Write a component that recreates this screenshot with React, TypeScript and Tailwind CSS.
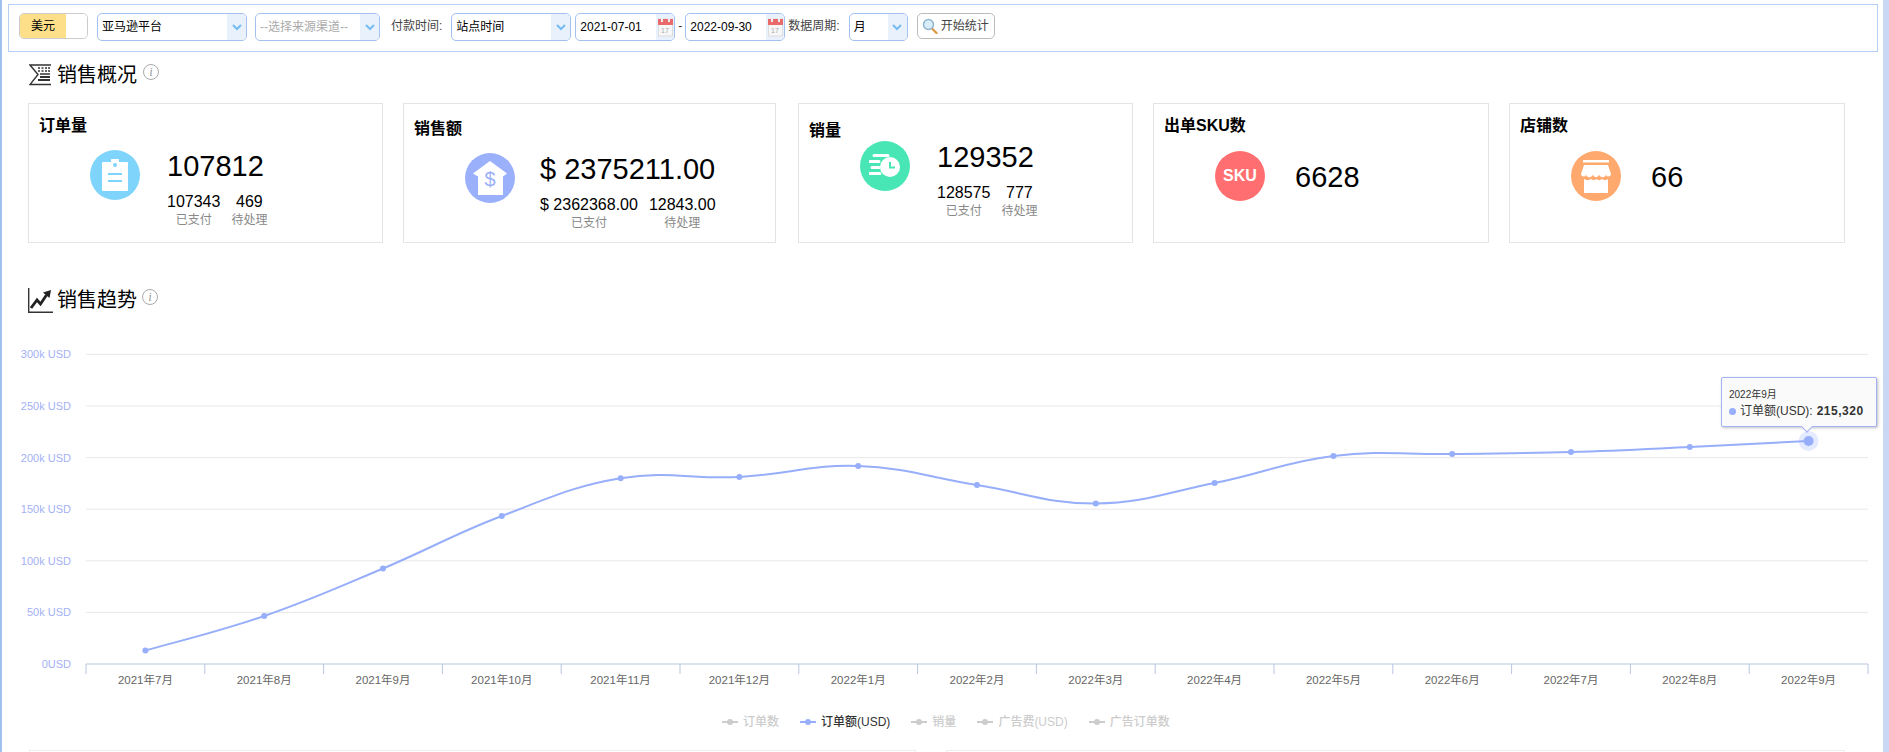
import type { ReactNode } from "react";

const STATS = [
  {
    title: "订单量",
    box: "w-[355px]",
    titlePad: "pt-[12px]",
    rowPad: "mt-[14px]",
    gap: "gap-[27px]",
    color: "bg-[#7fd4fb]",
    icon: "clipboard",
    total: "107812",
    paid: "107343",
    pending: "469",
  },
  {
    title: "销售额",
    box: "ml-[20px] w-[373px]",
    titlePad: "pt-[15px]",
    rowPad: "mt-[14px]",
    gap: "gap-[25px]",
    color: "bg-[#9bb0fb]",
    icon: "dollar",
    total: "$ 2375211.00",
    paid: "$ 2362368.00",
    pending: "12843.00",
  },
  {
    title: "销量",
    box: "ml-[22px] w-[335px]",
    titlePad: "pt-[17px]",
    rowPad: "mt-0",
    gap: "gap-[27px]",
    color: "bg-[#48e6b4]",
    icon: "clock",
    total: "129352",
    paid: "128575",
    pending: "777",
  },
  {
    title: "出单SKU数",
    box: "ml-[20px] w-[336px]",
    titlePad: "pt-[12px]",
    rowPad: "mt-[15px]",
    gap: "gap-[30px]",
    color: "bg-[#ff6f72]",
    icon: "sku",
    total: "6628",
  },
  {
    title: "店铺数",
    box: "ml-[20px] w-[336px]",
    titlePad: "pt-[12px]",
    rowPad: "mt-[15px]",
    gap: "gap-[30px]",
    color: "bg-[#ffa96e]",
    icon: "store",
    total: "66",
  },
];

const MONTHS = [
  "2021年7月", "2021年8月", "2021年9月", "2021年10月", "2021年11月",
  "2021年12月", "2022年1月", "2022年2月", "2022年3月", "2022年4月",
  "2022年5月", "2022年6月", "2022年7月", "2022年8月", "2022年9月",
];

const POINT_Y = [650.5, 616, 568.5, 516, 478.3, 477, 466, 485, 503.5, 483, 456, 454, 452, 447, 441];
const Y_TICKS = ["0USD", "50k USD", "100k USD", "150k USD", "200k USD", "250k USD", "300k USD"];
const LEGEND = [
  { label: "订单数", active: false, box: "" },
  { label: "订单额(USD)", active: true, box: "" },
  { label: "销量", active: false, box: "" },
  { label: "广告费(USD)", active: false, box: "" },
  { label: "广告订单数", active: false, box: "" },
];

const AXIS_LEFT = 86;
const AXIS_Y = 664;
const STEP = 118.8;
const pointX = (i: number) => AXIS_LEFT + STEP / 2 + i * STEP;

function linePath() {
  const pts = POINT_Y.map((y, i) => [pointX(i), y]);
  let d = `M${pts[0][0]} ${pts[0][1]}`;
  for (let i = 0; i < pts.length - 1; i++) {
    const p0 = pts[Math.max(i - 1, 0)];
    const p1 = pts[i];
    const p2 = pts[i + 1];
    const p3 = pts[Math.min(i + 2, pts.length - 1)];
    const t = 0.2;
    d += ` C${p1[0] + (p2[0] - p0[0]) * t} ${p1[1] + (p2[1] - p0[1]) * t} ${p2[0] - (p3[0] - p1[0]) * t} ${p2[1] - (p3[1] - p1[1]) * t} ${p2[0]} ${p2[1]}`;
  }
  return d;
}

function Chevron() {
  return (
    <svg width="10" height="7" viewBox="0 0 10 7" fill="none" aria-hidden>
      <path d="M1 1l4 4 4-4" stroke="#74bdf2" strokeWidth="2" />
    </svg>
  );
}

function Select({ width, text, muted }: { width: string; text: string; muted?: boolean }) {
  return (
    <div className={`flex h-[28px] items-stretch overflow-hidden rounded-[5px] border border-[#a2c1ee] ${width}`}>
      <span className={`flex-1 truncate pl-[4px] text-[12px] leading-[26px] ${muted ? "text-[#aaa]" : "text-black"}`}>
        {text}
      </span>
      <span className="flex w-[19px] items-center justify-center bg-[#e8f1fc]">
        <Chevron />
      </span>
    </div>
  );
}

function CalendarIcon() {
  return (
    <svg width="15" height="19" viewBox="0 0 15 19" aria-hidden>
      <rect x="0.5" y="1" width="14" height="17" fill="#f7f7f7" stroke="#ddd" />
      <rect x="0" y="1" width="15" height="6" fill="#e86a6a" />
      <rect x="3" y="0" width="2" height="4" fill="#eee" />
      <rect x="10" y="0" width="2" height="4" fill="#eee" />
      <text x="3" y="15" fontSize="7" fill="#aaa">17</text>
    </svg>
  );
}

function DateBox({ value }: { value: string }) {
  return (
    <div className="flex h-[28px] w-[100px] items-stretch overflow-hidden rounded-[5px] border border-[#a2c1ee]">
      <span className="flex-1 pl-[4px] text-[12px] leading-[26px] text-black">{value}</span>
      <span className="flex w-[18px] items-center justify-center bg-[#e8f1fc]">
        <CalendarIcon />
      </span>
    </div>
  );
}

function Toolbar() {
  return (
    <div className="mt-[4px] ml-[6px] flex h-[48px] w-[1870px] items-start border border-[#b3cff5] pt-[8px] pl-[10px]">
      <div className="flex h-[26px] w-[69px] overflow-hidden rounded-[5px] border border-[#ccc]">
        <span className="w-[46px] bg-[#fddf8a] text-center text-[12px] leading-[24px] text-black">美元</span>
        <span className="flex-1 rounded-[4px] bg-white" />
      </div>
      <div className="ml-[9px]"><Select width="w-[150px]" text="亚马逊平台" /></div>
      <div className="ml-[8px]"><Select width="w-[125px]" text="--选择来源渠道--" muted /></div>
      <span className="ml-[11px] text-[12px] leading-[26px] text-[#444]">付款时间:</span>
      <div className="ml-[9px]"><Select width="w-[120px]" text="站点时间" /></div>
      <div className="ml-[4px]"><DateBox value="2021-07-01" /></div>
      <span className="mx-[3px] w-[4px] text-[12px] leading-[26px] text-[#333]">-</span>
      <DateBox value="2022-09-30" />
      <span className="ml-[3px] text-[12px] leading-[26px] text-[#444]">数据周期:</span>
      <div className="ml-[9px]"><Select width="w-[59px]" text="月" /></div>
      <button
        type="button"
        className="ml-[9px] flex h-[26px] w-[78px] items-center gap-[3px] rounded-[5px] border border-[#bbb] bg-white pl-[4px] text-[12px] text-[#444]"
      >
        <svg width="16" height="16" viewBox="0 0 16 16" aria-hidden>
          <path d="M9.5 10l5 5" stroke="#d99a4a" strokeWidth="2.4" strokeLinecap="round" />
          <circle cx="6.5" cy="6.5" r="5" fill="#d8ecfa" stroke="#8fb4cf" strokeWidth="1.4" />
        </svg>
        开始统计
      </button>
    </div>
  );
}

function InfoIcon() {
  return (
    <span className="flex size-[16px] items-center justify-center rounded-full border border-[#aaa] font-serif text-[12px] leading-none text-[#999] italic">
      i
    </span>
  );
}

function Heading({ icon, box }: { icon: ReactNode; box: string }) {
  return null;
}

function OverviewIcon() {
  return (
    <svg width="23" height="22" viewBox="0 0 23 22" fill="none" stroke="#333" aria-hidden>
      <path d="M22 1H1l8 9.500L1 20.500h21" strokeWidth="1.4" />
      <path d="M9 4h2M12.500 4h2M16 4h2M19 4h2M9 7h2M12.500 7h2M16 7h2M19 7h2M11 10h10" strokeWidth="1.6" />
      <path d="M11 13h10M9 16h12" strokeWidth="1.8" />
    </svg>
  );
}

function TrendIcon() {
  return (
    <svg width="25" height="25" viewBox="0 0 25 25" fill="none" aria-hidden>
      <path d="M0.700 0v24.300H25" stroke="#333" strokeWidth="1.4" />
      <path d="M3 20l6-8 3.500 4 6-9" stroke="#222" strokeWidth="2.800" />
      <path d="M15 4.500L23 2l-1.500 8z" fill="#222" />
    </svg>
  );
}

function CircleGlyph({ name }: { name: string }) {
  if (name === "sku") {
    return <span className="text-[16px] font-bold text-white">SKU</span>;
  }
  if (name === "clipboard") {
    return (
      <svg width="28" height="32" viewBox="0 0 28 32" aria-hidden>
        <path d="M2 3h8V1.500a4 4 0 0 1 8 0V3h8a1 1 0 0 1 1 1v27a1 1 0 0 1-1 1H2a1 1 0 0 1-1-1V4a1 1 0 0 1 1-1z" fill="#fff" />
        <circle cx="14" cy="6" r="2" fill="#7fd4fb" />
        <path d="M7 15h14M7 22h14" stroke="#7fd4fb" strokeWidth="2" />
      </svg>
    );
  }
  if (name === "dollar") {
    return (
      <svg width="36" height="34" viewBox="0 0 36 34" aria-hidden>
        <path d="M18 0l17 12.500-4 3V34H6V15.500l-5-3z" fill="#fff" transform="translate(0 0)" />
        <text x="18" y="25" textAnchor="middle" fontSize="20" fill="#9bb0fb">$</text>
      </svg>
    );
  }
  if (name === "clock") {
    return (
      <svg width="32" height="24" viewBox="0 0 32 24" aria-hidden>
        <path d="M5 1.500h14M0 7.500h10M3 13.500h7M0 19.500h11" stroke="#fff" strokeWidth="3" strokeLinecap="round" />
        <circle cx="21" cy="13" r="10" fill="#fff" />
        <path d="M21 8v5.500h5" stroke="#48e6b4" strokeWidth="2" fill="none" />
      </svg>
    );
  }
  return (
    <svg width="30" height="33" viewBox="0 0 30 33" aria-hidden>
      <path d="M2 0h26v2.500H2z" fill="#fff" />
      <path d="M3 5h24l3 9c0 3-4.500 3.500-5 .500-.5 3.500-6 3.500-7 0-1 3.500-5 3.500-6 0-1 3.500-6.500 3.500-7 0-.5 3-5 2.500-5-.500z" fill="#fff" />
      <path d="M3 19c2 1.500 5 1.500 7 0 1.500 1.500 4 1.500 5.500 0 1.500 1.500 4 1.500 5.500 0 2 1.500 4.500 1.500 6 0V33H3z" fill="#fff" />
    </svg>
  );
}

function StatCard({ stat }: { stat: (typeof STATS)[number] }) {
  return (
    <div className={`h-[140px] border border-[#e2e4e8] pl-[10px] ${stat.box} ${stat.titlePad}`}>
      <h3 className="text-[16px] leading-[20px] font-bold text-black">{stat.title}</h3>
      <div className={`ml-[51px] flex items-start ${stat.rowPad} ${stat.gap}`}>
        <span className={`flex size-[50px] shrink-0 items-center justify-center rounded-full ${stat.color}`}>
          <CircleGlyph name={stat.icon} />
        </span>
        <div className={stat.paid ? "" : "pt-[10px]"}>
          <div className="text-[29px] leading-[32px] text-black">{stat.total}</div>
          {stat.paid && (
            <div className="mt-[10px] flex gap-[11px]">
              <div className="flex flex-col items-center">
                <span className="text-[16px] leading-[20px] text-black">{stat.paid}</span>
                <span className="text-[12px] leading-[16px] text-[#888]">已支付</span>
              </div>
              <div className="flex flex-col items-center">
                <span className="text-[16px] leading-[20px] text-black">{stat.pending}</span>
                <span className="text-[12px] leading-[16px] text-[#888]">待处理</span>
              </div>
            </div>
          )}
        </div>
      </div>
    </div>
  );
}

function TrendChart() {
  return (
    <div className="relative mt-[27px] h-[360px]">
      {/* viewBox uses page coordinates, the chart is only a drawing */}
      <svg width="1881" height="360" viewBox="2 340 1881 360" className="block" aria-hidden>
        {Y_TICKS.map((label, i) => {
          const y = AXIS_Y - i * 51.6;
          return (
            <g key={label}>
              {i > 0 && <line x1={AXIS_LEFT} x2={1868} y1={y} y2={y} stroke="#e8e8e8" />}
              <text x={71} y={y + 4} textAnchor="end" fontSize="11" fill="#a3b1f5">{label}</text>
            </g>
          );
        })}
        <line x1={AXIS_LEFT} x2={1868} y1={AXIS_Y} y2={AXIS_Y} stroke="#b8c7e0" />
        {Array.from({ length: 16 }, (_, i) => (
          <line
            key={i}
            x1={AXIS_LEFT + i * STEP}
            x2={AXIS_LEFT + i * STEP}
            y1={AXIS_Y}
            y2={AXIS_Y + 10}
            stroke="#b8c7e0"
          />
        ))}
        {MONTHS.map((m, i) => (
          <text key={m} x={pointX(i)} y={684} textAnchor="middle" fontSize="11.500" fill="#666">{m}</text>
        ))}
        <path d={linePath()} fill="none" stroke="#97aefa" strokeWidth="2" />
        {POINT_Y.map((y, i) => (
          <circle key={i} cx={pointX(i)} cy={y} r={3} fill="#97aefa" />
        ))}
        <circle cx={pointX(14)} cy={441} r={10} fill="#97aefa" fillOpacity="0.25" />
        <circle cx={pointX(14)} cy={441} r={5} fill="#97aefa" />
      </svg>
      <div className="absolute top-[37px] left-[1719px] h-[50px] w-[156px] rounded-[2px] border border-[#a3b1f5] bg-[#fafafa] pt-[10px] pl-[7px] shadow-[1px_1px_3px_rgba(0,0,0,0.25)]">
        <div className="text-[10px] leading-[14px] text-[#333]">2022年9月</div>
        <div className="flex items-center text-[12px] leading-[18px] text-[#333]">
          <span className="mr-[4px] size-[7px] rounded-full bg-[#97aefa]" />
          订单额(USD):
          <b className="ml-[4px] tracking-[0.5px]">215,320</b>
        </div>
        <span className="absolute -bottom-[5px] left-[81px] size-[8px] rotate-45 border-r border-b border-[#a3b1f5] bg-[#fafafa]" />
      </div>
    </div>
  );
}

function Legend() {
  return (
    <div className="mt-[14px] ml-[720px] flex h-[16px] items-center gap-[21px] text-[12px] font-medium">
      {LEGEND.map((item) => (
        <div key={item.label} className="flex items-center gap-[5px]">
          <svg width="16" height="8" viewBox="0 0 16 8" aria-hidden>
            <line x1="0" x2="16" y1="4" y2="4" stroke={item.active ? "#97aefa" : "#ccc"} strokeWidth="2" />
            <circle cx="8" cy="4" r="3" fill={item.active ? "#97aefa" : "#ccc"} />
          </svg>
          <span className={item.active ? "text-[#333]" : "text-[#ccc]"}>{item.label}</span>
        </div>
      ))}
    </div>
  );
}

export default function App() {
  return (
    <div className="flex h-[752px] w-[1889px] overflow-hidden bg-white [font-family:'Liberation_Sans','Noto_Sans_CJK_SC',sans-serif]">
      <div className="w-[2px] shrink-0 bg-[#a0c0ee]" />
      <main className="w-[1881px] shrink-0">
        <Toolbar />
        <div className="mt-[12px] ml-[27px] flex h-[22px] items-center">
          <OverviewIcon />
          <span className="ml-[5px] text-[20px] leading-[22px] text-black">销售概况</span>
          <span className="ml-[6px] -translate-y-[3px]"><InfoIcon /></span>
        </div>
        <div className="mt-[17px] ml-[26px] flex">
          {STATS.map((stat) => (
            <StatCard key={stat.title} stat={stat} />
          ))}
        </div>
        <div className="mt-[45px] ml-[26px] flex h-[25px] items-center">
          <TrendIcon />
          <span className="ml-[4px] text-[20px] leading-[25px] text-black">销售趋势</span>
          <span className="ml-[5px] -translate-y-[4px]"><InfoIcon /></span>
        </div>
        <TrendChart />
        <Legend />
        <div className="mt-[20px] ml-[27px] flex gap-[30px]">
          <div className="h-[40px] w-[887px] border border-[#eee]" />
          <div className="h-[40px] w-[899px] border border-[#eee]" />
        </div>
      </main>
      <div className="w-[6px] shrink-0 bg-[#c9d9f5]" />
    </div>
  );
}
